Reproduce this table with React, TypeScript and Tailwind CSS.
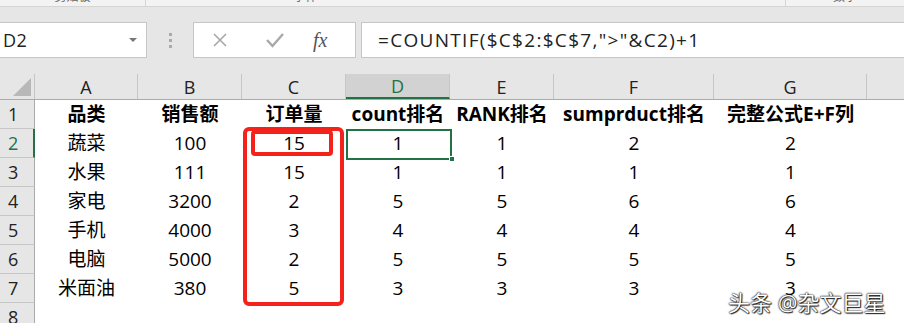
import React from "react";

const cols = [
  { key: "A", w: "w-[103px]" },
  { key: "B", w: "w-[104px]" },
  { key: "C", w: "w-[104px]" },
  { key: "D", w: "w-[104px]" },
  { key: "E", w: "w-[104px]" },
  { key: "F", w: "w-[160px]" },
  { key: "G", w: "w-[153px]" },
];

const rows = [
  ["品类", "销售额", "订单量", "count排名", "RANK排名", "sumprduct排名", "完整公式E+F列"],
  ["蔬菜", "100", "15", "1", "1", "2", "2"],
  ["水果", "111", "15", "1", "1", "1", "1"],
  ["家电", "3200", "2", "5", "5", "6", "6"],
  ["手机", "4000", "3", "4", "4", "4", "4"],
  ["电脑", "5000", "2", "5", "5", "5", "5"],
  ["米面油", "380", "5", "3", "3", "3", "3"],
];

const font = { fontFamily: '"Open Sans", "Noto Sans CJK SC", sans-serif' };

export default function App() {
  return (
    <div className="w-[904px] h-[323px] overflow-hidden bg-white relative" style={font}>
      {/* ribbon bottom, cut off */}
      <div className="h-[7px] bg-[#f3f3f3] border-b border-[#d5d5d5] flex overflow-hidden text-[12px] text-[#666] leading-none">
        <div className="w-[146px] border-r border-[#d5d5d5] flex justify-center">
          <span className="-mt-[9px]">剪贴板</span>
        </div>
        <div className="w-[640px] border-r border-[#d5d5d5] flex justify-center">
          <span className="-mt-[9px] mr-[320px]">字体</span>
        </div>
        <div className="flex-1 flex justify-center">
          <span className="-mt-[9px]">数字</span>
        </div>
      </div>

      {/* formula bar */}
      <div className="h-[67px] bg-[#e6e6e6] flex items-start pt-[15px]">
        <div className="w-[147px] h-[36px] bg-white border border-[#c6c6c6] border-l-0 flex items-center justify-between pl-[3px] pr-[9px]">
          <span className="text-[18px] text-[#222] tracking-[0.5px]">D2</span>
          <span className="w-0 h-0 border-l-[4px] border-r-[4px] border-t-[4px] border-l-transparent border-r-transparent border-t-[#777]" />
        </div>
        <div className="w-[46px] h-[36px] flex flex-col items-center justify-center gap-[3px]">
          <span className="w-[3px] h-[3px] bg-[#aaa]" />
          <span className="w-[3px] h-[3px] bg-[#aaa]" />
          <span className="w-[3px] h-[3px] bg-[#aaa]" />
        </div>
        <div className="w-[163px] h-[36px] bg-white border border-[#c6c6c6] flex items-center">
          <svg className="ml-[18px]" width="16" height="16" viewBox="0 0 16 16">
            <path d="M2 2 L14 14 M14 2 L2 14" stroke="#a8a8a8" strokeWidth="1.6" fill="none" />
          </svg>
          <svg className="ml-[38px]" width="18" height="16" viewBox="0 0 18 16">
            <path d="M1 8 L6.5 14 L17 2" stroke="#a8a8a8" strokeWidth="2.4" fill="none" />
          </svg>
          <span
            className="ml-[29px] text-[20px] italic text-[#555] leading-none"
            style={{ fontFamily: '"Liberation Serif", serif' }}
          >
            fx
          </span>
        </div>
        <div className="ml-[5px] flex-1 h-[36px] bg-white border border-[#c6c6c6] border-r-0 flex items-center pl-[16px]">
          <span className="text-[19px] text-[#222] whitespace-nowrap tracking-[1.3px]">=COUNTIF($C$2:$C$7,"&gt;"&amp;C2)+1</span>
        </div>
      </div>

      {/* column headers */}
      <div className="h-[26px] flex bg-[#e6e6e6] border-b border-[#ababab]">
        <div className="w-[35px] h-full border-r border-[#c6c6c6] flex items-end justify-end p-[3px]">
          <span className="w-[18px] h-[18px] bg-[#b8b8b8] [clip-path:polygon(100%_0,100%_100%,0_100%)]" />
        </div>
        {cols.map((c) => (
          <div
            key={c.key}
            className={`${c.w} h-full border-r border-[#c6c6c6] flex items-center justify-center text-[18px] leading-none ${
              c.key === "D" ? "bg-[#d2d2d2] text-[#217346] border-b-2 border-b-[#217346]" : "text-[#222]"
            }`}
          >
            {c.key}
          </div>
        ))}
        <div className="flex-1 h-full" />
      </div>

      {/* rows */}
      <div className="relative">
        {[...rows, null].map((r, i) => (
          <div key={i} className="h-[29px] flex">
            <div
              className={`w-[35px] h-full bg-[#e6e6e6] border-b border-[#c6c6c6] flex items-center pl-[8px] text-[18px] leading-none ${
                i === 1 ? "bg-[#d2d2d2] text-[#217346] border-r-2 border-r-[#217346]" : "text-[#222] border-r border-r-[#ababab]"
              }`}
            >
              {i + 1}
            </div>
            {r &&
              r.map((v, j) => (
                <div
                  key={j}
                  className={`${cols[j].w} h-full flex items-center justify-center text-[19px] text-black whitespace-nowrap ${
                    i === 0 ? "font-bold" : ""
                  }`}
                >
                  {v}
                </div>
              ))}
          </div>
        ))}

        {/* active cell D2 */}
        <div className="absolute left-[346px] top-[29px] w-[106px] h-[31px] border-2 border-[#217346]" />
        <div className="absolute left-[449px] top-[56px] w-[6px] h-[6px] bg-[#217346] border border-white" />

        {/* red marks */}
        <div className="absolute left-[243px] top-[27px] w-[101px] h-[179px] border-[4px] border-[#f5221b] rounded-[6px]" />
        <div className="absolute left-[251px] top-[30px] w-[82px] h-[26px] border-[4px] border-[#f5221b] rounded-[4px]" />

        {/* watermark */}
        <div
          className="absolute left-[728px] top-[186px] text-[22px] text-white whitespace-nowrap"
          style={{ textShadow: "0 0 2px #000, 0 0 1px #000, 1px 1px 1px #333" }}
        >
          头条 @杂文巨星
        </div>
      </div>
    </div>
  );
}
